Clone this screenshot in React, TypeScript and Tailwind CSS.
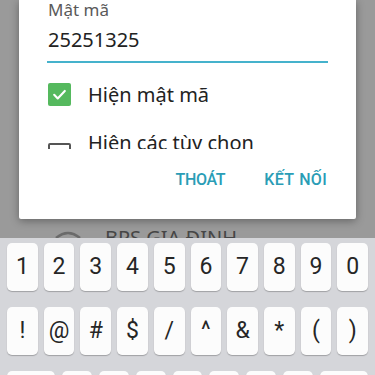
import React from "react";

const row1 = ["1", "2", "3", "4", "5", "6", "7", "8", "9", "0"];
const row2 = ["!", "@", "#", "$", "/", "^", "&", "*", "(", ")"];

function Key({ label, className = "" }: { label?: string; className?: string }) {
  return (
    <div
      className={
        "h-[48px] bg-[#fcfcfc] rounded-[5px] shadow-[0_1px_1px_rgba(0,0,0,0.25)] flex items-center justify-center text-[23px] text-[#262626] " +
        className
      }
      style={{ fontFamily: "Roboto, 'Noto Sans', sans-serif" }}
    >
      {label}
    </div>
  );
}

export default function App() {
  return (
    <div className="w-[375px] h-[375px] overflow-hidden bg-[#9a9a9a] flex flex-col">
      <div className="h-[238px] shrink-0 flex flex-col overflow-hidden">
        <div className="mx-[19px] h-[219px] shrink-0 bg-white rounded-b-[2px] shadow-[0_2px_8px_rgba(0,0,0,0.35)] px-[28px] flex flex-col"
          style={{ fontFamily: "'Noto Sans', sans-serif" }}>
          <div className="h-[20px] leading-[20px] text-[17px] text-[#5a5a5a] pl-[1px]">Mật mã</div>
          <div className="pt-[6px] pb-[7px] border-b-2 border-[#45b2cc]">
            <div className="h-[28px] leading-[28px] text-[20px] text-[#222] pl-[1px]">25251325</div>
          </div>
          <div className="h-[86px] overflow-hidden pt-[8px] flex flex-col">
            <div className="h-[48px] shrink-0 flex items-start">
              <div className="mt-[12px] ml-[1px] w-[23px] h-[23px] rounded-[2px] bg-[#55b95e] flex items-center justify-center">
                <svg width="17" height="17" viewBox="0 0 24 24" fill="none">
                  <path d="M4.5 12.5l5 5L19.5 7" stroke="white" strokeWidth="3" strokeLinecap="round" strokeLinejoin="round" />
                </svg>
              </div>
              <div className="ml-[17px] mt-[10px] h-[28px] leading-[28px] text-[20px] text-[#222]">Hiện mật mã</div>
            </div>
            <div className="h-[60px] shrink-0 flex items-start">
              <div className="mt-[24px] ml-[1px] w-[23px] h-[23px] rounded-[2px] border-2 border-[#555]" />
              <div className="ml-[17px] mt-[10px] h-[28px] leading-[28px] text-[20px] text-[#222]">Hiện các tùy chon</div>
            </div>
          </div>
          <div className="flex-1 flex items-center justify-end gap-[39px] pb-[8px] pr-[1px]">
            <span className="text-[16px] font-medium tracking-[-0.3px] text-[#2a9db6]" style={{ fontFamily: "Roboto, sans-serif" }}>THOÁT</span>
            <span className="text-[16px] font-medium tracking-[0.3px] text-[#2a9db6] [word-spacing:1px]" style={{ fontFamily: "Roboto, sans-serif" }}>KẾT NỐI</span>
          </div>
        </div>
        <div className="flex items-start pl-[55px] pt-[11px]">
          <svg width="26" height="20" viewBox="0 0 26 20" fill="none">
            <path d="M1 8 Q13 -2 25 8" stroke="#6a6a6a" strokeWidth="2.5" fill="none" />
          </svg>
          <div className="ml-[24px] -mt-[6px] text-[20px] leading-[28px] text-[#464646]" style={{ fontFamily: "'Noto Sans', sans-serif" }}>
            BPS GIA ĐINH
          </div>
        </div>
      </div>
      <div className="flex-1 bg-[#d5d6da] px-[7px] pt-[5px] flex flex-col gap-[16px]">
        <div className="flex gap-[6px]">
          {row1.map((k) => (
            <Key key={k} label={k} className="flex-1" />
          ))}
        </div>
        <div className="flex gap-[6px]">
          {row2.map((k) => (
            <Key key={k} label={k} className="flex-1" />
          ))}
        </div>
        <div className="flex gap-[7px]">
          <Key className="w-[48px] shrink-0 bg-[#eeeff1]" />
          {[0, 1, 2, 3, 4, 5, 6].map((i) => (
            <Key key={i} className="flex-1" />
          ))}
          <Key className="w-[48px] shrink-0 bg-[#eeeff1]" />
        </div>
      </div>
    </div>
  );
}
